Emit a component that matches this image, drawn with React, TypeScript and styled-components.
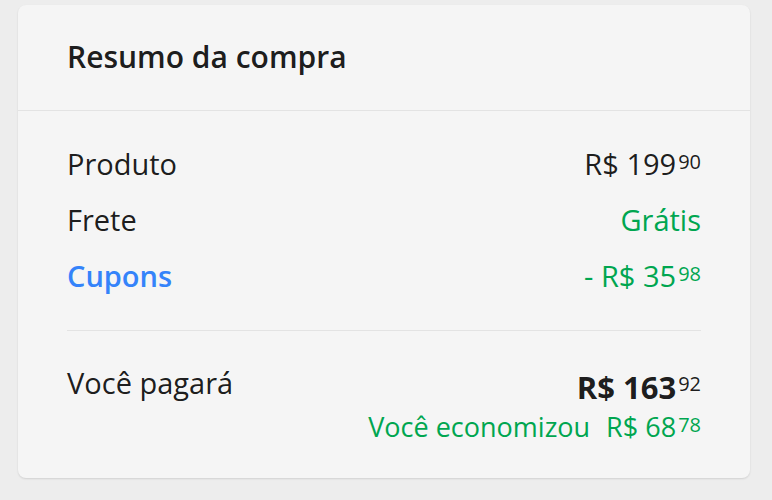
import styled, { createGlobalStyle } from "styled-components";

const Global = createGlobalStyle`
  body {
    margin: 0;
    background: #ededed;
    font-family: "Open Sans", "Noto Sans", sans-serif;
    color: rgba(0, 0, 0, 0.9);
  }
`;

const Page = styled.div`
  padding: 5px 22px 20px 18px;
`;

const Card = styled.section`
  background: #f5f5f5;
  border-radius: 8px;
  box-shadow: 0 1px 2px rgba(0, 0, 0, 0.12);
  width: 732px;
`;

const Header = styled.header`
  height: 106px;
  box-sizing: border-box;
  padding: 36px 49px 0;
  border-bottom: 1px solid #e3e3e3;
`;

const Title = styled.h2`
  margin: 0;
  font-size: 30px;
  font-weight: 600;
  line-height: 32px;
  color: rgba(0, 0, 0, 0.9);
`;

const Body = styled.div`
  padding: 25px 49px 35px;
`;

const Row = styled.div`
  display: flex;
  justify-content: space-between;
  align-items: center;
  height: 56px;
  font-size: 29px;
  line-height: 32px;
`;

const Label = styled.span<{ $link?: boolean }>`
  color: ${({ $link }) => ($link ? "#3483fa" : "inherit")};
  font-weight: ${({ $link }) => ($link ? 600 : 400)};
`;

const Value = styled.span<{ $green?: boolean; $bold?: boolean; $size?: number }>`
  color: ${({ $green }) => ($green ? "#00a650" : "inherit")};
  font-weight: ${({ $bold }) => ($bold ? 700 : 400)};
  font-size: ${({ $size }) => ($size ? `${$size}px` : "inherit")};
  line-height: ${({ $size }) => ($size ? `${$size + 3}px` : "inherit")};
  white-space: nowrap;
`;

const Cents = styled.sup<{ $raise: number }>`
  font-size: 20px;
  font-weight: 400;
  line-height: 0;
  vertical-align: ${({ $raise }) => $raise}px;
  margin-left: 2px;
`;

const Divider = styled.hr`
  border: none;
  border-top: 1px solid #e3e3e3;
  margin: 26px 0 0;
  height: 0;
`;

const Total = styled.div`
  display: flex;
  justify-content: space-between;
  align-items: flex-start;
  padding-top: 36px;
`;

const TotalLabel = styled.span`
  font-size: 29px;
  line-height: 32px;
`;

const TotalRight = styled.div`
  display: flex;
  flex-direction: column;
  align-items: flex-end;
  gap: 7px;
  margin-top: 3px;
`;

const Saving = styled.div`
  color: #00a650;
  font-size: 27px;
  line-height: 32px;
  display: flex;
  gap: 16px;
  white-space: nowrap;
`;

const Price = ({ whole, cents, raise = 6 }: { whole: string; cents: string; raise?: number }) => (
  <>
    R$ {whole}
    <Cents $raise={raise}>{cents}</Cents>
  </>
);

export default function App() {
  return (
    <>
      <Global />
      <Page>
        <Card>
          <Header>
            <Title>Resumo da compra</Title>
          </Header>
          <Body>
            <Row>
              <Label>Produto</Label>
              <Value>
                <Price whole="199" cents="90" />
              </Value>
            </Row>
            <Row>
              <Label>Frete</Label>
              <Value $green>Grátis</Value>
            </Row>
            <Row>
              <Label $link>Cupons</Label>
              <Value $green>
                - <Price whole="35" cents="98" />
              </Value>
            </Row>
            <Divider />
            <Total>
              <TotalLabel>Você pagará</TotalLabel>
              <TotalRight>
                <Value $bold $size={31}>
                  <Price whole="163" cents="92" raise={8} />
                </Value>
                <Saving>
                  <span>Você economizou</span>
                  <span>
                    <Price whole="68" cents="78" raise={5} />
                  </span>
                </Saving>
              </TotalRight>
            </Total>
          </Body>
        </Card>
      </Page>
    </>
  );
}
